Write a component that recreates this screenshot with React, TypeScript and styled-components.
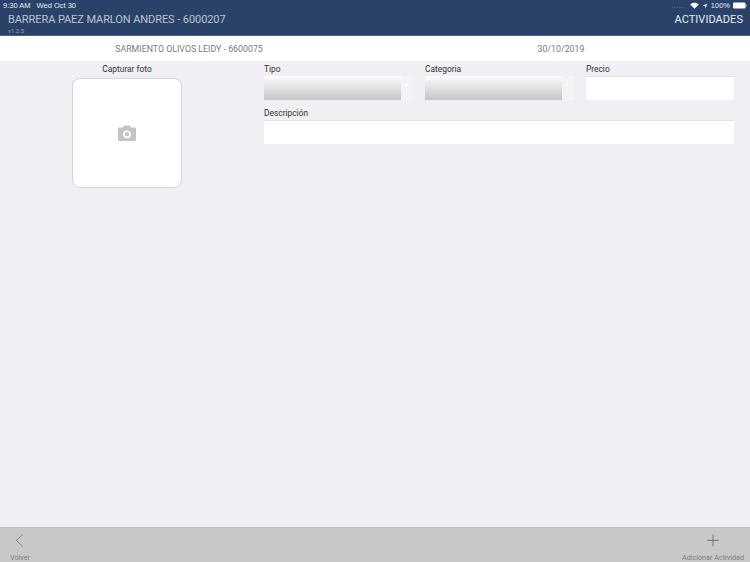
import React from 'react';
import styled, { createGlobalStyle } from 'styled-components';

const GlobalStyle = createGlobalStyle`
  html, body {
    margin: 0;
    padding: 0;
    background: #efeff4;
  }
  * {
    box-sizing: border-box;
  }
`;

const Page = styled.div`
  width: 750px;
  height: 562px;
  display: flex;
  flex-direction: column;
  overflow: hidden;
  background: #efeff4;
  font-family: Roboto, "Liberation Sans", sans-serif;
`;

const Header = styled.header`
  height: 36px;
  background: #2a4269;
  border-bottom: 1px solid #4c5f7e;
  display: flex;
  flex-direction: column;
  color: #fff;
`;

const StatusBar = styled.div`
  height: 11px;
  padding: 0 3px;
  display: flex;
  justify-content: space-between;
  align-items: center;
  font-family: "Liberation Sans", sans-serif;
  font-size: 7.5px;
  color: #e9edf3;
`;

const StatusLeft = styled.div`
  display: flex;
  gap: 6px;
`;

const StatusRight = styled.div`
  display: flex;
  align-items: center;
  gap: 3px;
`;

const SignalDots = styled.span`
  margin-right: 3px;
  letter-spacing: 0.4px;
  color: #7d8ba3;
`;

const TitleRow = styled.div`
  height: 16px;
  padding: 0 7px 0 8px;
  display: flex;
  justify-content: space-between;
  align-items: center;
`;

const Title = styled.div<{ $spacing: number }>`
  font-size: 11px;
  letter-spacing: ${({ $spacing }) => $spacing}px;
  color: ${({ color }) => color};
`;

const Version = styled.div`
  padding-left: 8px;
  font-size: 6px;
  line-height: 8px;
  color: #97a3b6;
`;

const SubHeader = styled.div`
  height: 25px;
  background: #fff;
  display: flex;
  align-items: center;
  font-size: 8.8px;
  color: #7b7b7b;
`;

const SubCell = styled.div<{ $width: number }>`
  width: ${({ $width }) => $width}px;
  text-align: center;
`;

const Content = styled.main`
  flex: 1;
  display: flex;
  padding-top: 2px;
`;

const PhotoColumn = styled.section`
  width: 254px;
  display: flex;
  flex-direction: column;
  align-items: center;
`;

const FieldLabel = styled.div`
  height: 12px;
  font-size: 8.4px;
  line-height: 13px;
  color: #333;
`;

const PhotoBox = styled.div`
  width: 110px;
  height: 110px;
  margin-top: 3px;
  background: #fff;
  border: 1px solid #d6d6da;
  border-radius: 8px;
  display: flex;
  align-items: center;
  justify-content: center;
`;

const Form = styled.section`
  width: 470px;
  margin-left: 10px;
  display: flex;
  flex-direction: column;
  gap: 7px;
`;

const FormRow = styled.div`
  display: grid;
  grid-template-columns: 148px 148px 148px;
  column-gap: 13px;
`;

const Field = styled.div`
  display: flex;
  flex-direction: column;
  gap: 1px;
`;

const SelectBox = styled.div`
  height: 24px;
  display: flex;
  background: #f4f4f7;
`;

const SelectFace = styled.div`
  flex: 1;
  background: linear-gradient(#fdfdfd, #c4c4c4);
`;

const SelectArrow = styled.div`
  width: 11px;
  display: flex;
  align-items: center;
  justify-content: center;
  padding-bottom: 6px;
`;

const Input = styled.div<{ $height: number }>`
  height: ${({ $height }) => $height}px;
  background: #fff;
  border-top: 1px solid #e3e3e6;
`;

const Footer = styled.footer`
  height: 35px;
  background: #c8c8c8;
  border-top: 1px solid #bcbcbc;
  padding: 0 6px 0 10px;
  display: flex;
  justify-content: space-between;
  font-size: 7.2px;
  color: #7d7d7d;
`;

const FooterButton = styled.div`
  display: flex;
  flex-direction: column;
  align-items: center;
  height: 100%;
  padding-top: 4px;
`;

const FooterIcon = styled.svg`
  display: block;
  width: 20px;
  height: 20px;
`;

const FooterText = styled.span`
  margin-top: 5px;
  line-height: 9px;
`;

const Wifi = () => (
  <svg width="9" height="7" viewBox="0 0 18 14">
    <path d="M9 13.5 0.5 4.8C5.5 0.2 12.5 0.2 17.5 4.8Z" fill="#fff" />
  </svg>
);

const Location = () => (
  <svg width="6" height="6" viewBox="0 0 12 12">
    <path d="M11 1 1 5.6 5.8 6.2 6.4 11Z" fill="#e9edf3" />
  </svg>
);

const Battery = () => (
  <svg width="14" height="7" viewBox="0 0 28 14">
    <rect x="0" y="1" width="25" height="12" rx="2.5" fill="#fff" />
    <rect x="26" y="5" width="2" height="4" fill="#9aa6b8" />
  </svg>
);

const Camera = () => (
  <svg width="18" height="16" viewBox="0 0 18 16">
    <path
      fillRule="evenodd"
      d="M1.5 2.5H5L6 .6H12L13 2.5H16.5C17.3 2.5 18 3.2 18 4V14.5C18 15.3 17.3 16 16.5 16H1.5C.7 16 0 15.3 0 14.5V4C0 3.2.7 2.5 1.5 2.5ZM9 5.4A3.9 3.9 0 1 0 9 13.2 3.9 3.9 0 1 0 9 5.4ZM9 7A2.3 2.3 0 1 1 9 11.6 2.3 2.3 0 1 1 9 7Z"
      fill="#c4c4c4"
    />
  </svg>
);

const SelectCaret = () => (
  <svg width="3" height="3" viewBox="0 0 3 3">
    <path d="M0 0.5 1.5 2.5 3 0.5Z" fill="#fff" />
  </svg>
);

export default function App() {
  return (
    <Page>
      <GlobalStyle />
      <Header>
        <StatusBar>
          <StatusLeft>
            <span>9:30 AM</span>
            <span>Wed Oct 30</span>
          </StatusLeft>
          <StatusRight>
            <SignalDots>.....</SignalDots>
            <Wifi />
            <Location />
            <span>100%</span>
            <Battery />
          </StatusRight>
        </StatusBar>
        <TitleRow>
          <Title color="#bcc3cf" $spacing={-0.08}>BARRERA PAEZ MARLON ANDRES - 6000207</Title>
          <Title color="#e6eaf0" $spacing={0.05}>ACTIVIDADES</Title>
        </TitleRow>
        <Version>v1.2.5</Version>
      </Header>
      <SubHeader>
        <SubCell $width={378}>SARMIENTO OLIVOS LEIDY - 6600075</SubCell>
        <SubCell $width={366}>30/10/2019</SubCell>
      </SubHeader>
      <Content>
        <PhotoColumn>
          <FieldLabel>Capturar foto</FieldLabel>
          <PhotoBox>
            <Camera />
          </PhotoBox>
        </PhotoColumn>
        <Form>
          <FormRow>
            <Field>
              <FieldLabel>Tipo</FieldLabel>
              <SelectBox>
                <SelectFace />
                <SelectArrow>
                  <SelectCaret />
                </SelectArrow>
              </SelectBox>
            </Field>
            <Field>
              <FieldLabel>Categoria</FieldLabel>
              <SelectBox>
                <SelectFace />
                <SelectArrow>
                  <SelectCaret />
                </SelectArrow>
              </SelectBox>
            </Field>
            <Field>
              <FieldLabel>Precio</FieldLabel>
              <Input $height={24} />
            </Field>
          </FormRow>
          <Field>
            <FieldLabel>Descripción</FieldLabel>
            <Input $height={24} />
          </Field>
        </Form>
      </Content>
      <Footer>
        <FooterButton>
          <FooterIcon viewBox="0 0 20 20">
            <path d="M13.5 3 5.5 10.5 13.5 18" fill="none" stroke="#6f6f6f" strokeWidth="1" />
          </FooterIcon>
          <FooterText>Volver</FooterText>
        </FooterButton>
        <FooterButton>
          <FooterIcon viewBox="0 0 20 20">
            <path d="M10 3V18M3 10.5H17" fill="none" stroke="#6f6f6f" strokeWidth="1.2" />
          </FooterIcon>
          <FooterText>Adicionar Actividad</FooterText>
        </FooterButton>
      </Footer>
    </Page>
  );
}
